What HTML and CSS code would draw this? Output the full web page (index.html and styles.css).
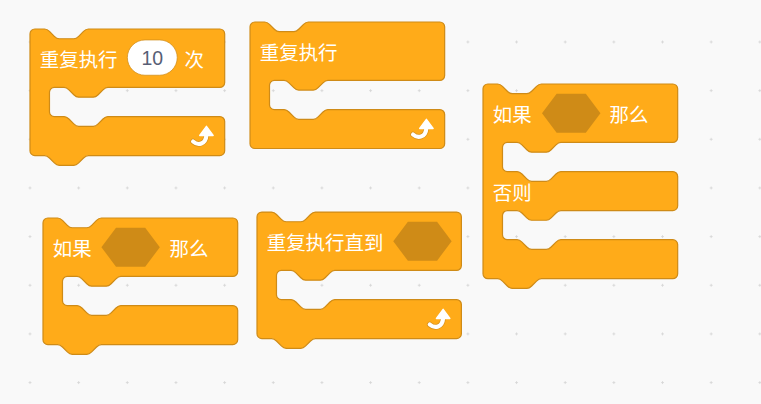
FILE: index.html
```html
<!DOCTYPE html>
<html lang="zh">
<head>
  <meta charset="UTF-8">
  <title>控制积木</title>
  <link rel="stylesheet" href="styles.css">
</head>
<body>
  <div class="workspace">

    <!-- 重复执行 10 次 -->
    <svg class="block b-repeat" viewBox="0 0 160 112">
      <path class="shape" d="M0,4 A4,4 0 0,1 4,0 H12 c2,0 3,1 4,2 l4,4 c1,1 2,2 4,2 h12 c2,0 3,-1 4,-2 l4,-4 c1,-1 2,-2 4,-2 H156 A4,4 0 0,1 160,4 V44 A4,4 0 0,1 156,48 H64 c-2,0 -3,1 -4,2 l-4,4 c-1,1 -2,2 -4,2 h-12 c-2,0 -3,-1 -4,-2 l-4,-4 c-1,-1 -2,-2 -4,-2 H20 A4,4 0 0,0 16,52 V68 A4,4 0 0,0 20,72 H28 c2,0 3,1 4,2 l4,4 c1,1 2,2 4,2 h12 c2,0 3,-1 4,-2 l4,-4 c1,-1 2,-2 4,-2 H156 A4,4 0 0,1 160,76 V100 A4,4 0 0,1 156,104 H48 c-2,0 -3,1 -4,2 l-4,4 c-1,1 -2,2 -4,2 h-12 c-2,0 -3,-1 -4,-2 l-4,-4 c-1,-1 -2,-2 -4,-2 H4 A4,4 0 0,1 0,100 Z"/>
      <text class="label" x="8" y="24">重复执行</text>
      <rect class="num-field" x="80" y="9" width="41" height="29" rx="14.5"/>
      <text class="num-text" x="100.5" y="24">10</text>
      <text class="label" x="127" y="24">次</text>
      <g class="loop-icon" transform="translate(130,76)">
        <path class="arrow-edge" d="M4 16.5 C8 20, 14.5 19, 15 11"/>
        <path class="arrow-line" d="M4 16.5 C8 20, 14.5 19, 15 11"/>
        <path class="arrow-head" d="M15 4 L20.5 11.5 L9.5 11.5 Z"/>
      </g>
    </svg>

    <!-- 重复执行 -->
    <svg class="block b-forever" viewBox="0 0 160 104">
      <path class="shape" d="M0,4 A4,4 0 0,1 4,0 H12 c2,0 3,1 4,2 l4,4 c1,1 2,2 4,2 h12 c2,0 3,-1 4,-2 l4,-4 c1,-1 2,-2 4,-2 H156 A4,4 0 0,1 160,4 V44 A4,4 0 0,1 156,48 H64 c-2,0 -3,1 -4,2 l-4,4 c-1,1 -2,2 -4,2 h-12 c-2,0 -3,-1 -4,-2 l-4,-4 c-1,-1 -2,-2 -4,-2 H20 A4,4 0 0,0 16,52 V68 A4,4 0 0,0 20,72 H28 c2,0 3,1 4,2 l4,4 c1,1 2,2 4,2 h12 c2,0 3,-1 4,-2 l4,-4 c1,-1 2,-2 4,-2 H156 A4,4 0 0,1 160,76 V100 A4,4 0 0,1 156,104 H4 A4,4 0 0,1 0,100 Z"/>
      <text class="label" x="8" y="24">重复执行</text>
      <g class="loop-icon" transform="translate(130,76)">
        <path class="arrow-edge" d="M4 16.5 C8 20, 14.5 19, 15 11"/>
        <path class="arrow-line" d="M4 16.5 C8 20, 14.5 19, 15 11"/>
        <path class="arrow-head" d="M15 4 L20.5 11.5 L9.5 11.5 Z"/>
      </g>
    </svg>

    <!-- 如果 那么 否则 -->
    <svg class="block b-ifelse" viewBox="0 0 160 168">
      <path class="shape" d="M0,4 A4,4 0 0,1 4,0 H12 c2,0 3,1 4,2 l4,4 c1,1 2,2 4,2 h12 c2,0 3,-1 4,-2 l4,-4 c1,-1 2,-2 4,-2 H156 A4,4 0 0,1 160,4 V44 A4,4 0 0,1 156,48 H64 c-2,0 -3,1 -4,2 l-4,4 c-1,1 -2,2 -4,2 h-12 c-2,0 -3,-1 -4,-2 l-4,-4 c-1,-1 -2,-2 -4,-2 H20 A4,4 0 0,0 16,52 V68 A4,4 0 0,0 20,72 H28 c2,0 3,1 4,2 l4,4 c1,1 2,2 4,2 h12 c2,0 3,-1 4,-2 l4,-4 c1,-1 2,-2 4,-2 H156 A4,4 0 0,1 160,76 V100 A4,4 0 0,1 156,104 H64 c-2,0 -3,1 -4,2 l-4,4 c-1,1 -2,2 -4,2 h-12 c-2,0 -3,-1 -4,-2 l-4,-4 c-1,-1 -2,-2 -4,-2 H20 A4,4 0 0,0 16,108 V124 A4,4 0 0,0 20,128 H28 c2,0 3,1 4,2 l4,4 c1,1 2,2 4,2 h12 c2,0 3,-1 4,-2 l4,-4 c1,-1 2,-2 4,-2 H156 A4,4 0 0,1 160,132 V156 A4,4 0 0,1 156,160 H48 c-2,0 -3,1 -4,2 l-4,4 c-1,1 -2,2 -4,2 h-12 c-2,0 -3,-1 -4,-2 l-4,-4 c-1,-1 -2,-2 -4,-2 H4 A4,4 0 0,1 0,156 Z"/>
      <text class="label" x="8" y="24">如果</text>
      <path class="hole" transform="translate(48.5,8)" d="M12,0 H36 L48,16 L36,32 H12 L0,16 Z"/>
      <text class="label" x="104" y="24">那么</text>
      <text class="label" x="8" y="88">否则</text>
    </svg>

    <!-- 如果 那么 -->
    <svg class="block b-if" viewBox="0 0 160 112">
      <path class="shape" d="M0,4 A4,4 0 0,1 4,0 H12 c2,0 3,1 4,2 l4,4 c1,1 2,2 4,2 h12 c2,0 3,-1 4,-2 l4,-4 c1,-1 2,-2 4,-2 H156 A4,4 0 0,1 160,4 V44 A4,4 0 0,1 156,48 H64 c-2,0 -3,1 -4,2 l-4,4 c-1,1 -2,2 -4,2 h-12 c-2,0 -3,-1 -4,-2 l-4,-4 c-1,-1 -2,-2 -4,-2 H20 A4,4 0 0,0 16,52 V68 A4,4 0 0,0 20,72 H28 c2,0 3,1 4,2 l4,4 c1,1 2,2 4,2 h12 c2,0 3,-1 4,-2 l4,-4 c1,-1 2,-2 4,-2 H156 A4,4 0 0,1 160,76 V100 A4,4 0 0,1 156,104 H48 c-2,0 -3,1 -4,2 l-4,4 c-1,1 -2,2 -4,2 h-12 c-2,0 -3,-1 -4,-2 l-4,-4 c-1,-1 -2,-2 -4,-2 H4 A4,4 0 0,1 0,100 Z"/>
      <text class="label" x="8" y="24">如果</text>
      <path class="hole" transform="translate(48,8)" d="M12,0 H36 L48,16 L36,32 H12 L0,16 Z"/>
      <text class="label" x="104" y="24">那么</text>
    </svg>

    <!-- 重复执行直到 -->
    <svg class="block b-until" viewBox="0 0 168 112">
      <path class="shape" d="M0,4 A4,4 0 0,1 4,0 H12 c2,0 3,1 4,2 l4,4 c1,1 2,2 4,2 h12 c2,0 3,-1 4,-2 l4,-4 c1,-1 2,-2 4,-2 H164 A4,4 0 0,1 168,4 V44 A4,4 0 0,1 164,48 H64 c-2,0 -3,1 -4,2 l-4,4 c-1,1 -2,2 -4,2 h-12 c-2,0 -3,-1 -4,-2 l-4,-4 c-1,-1 -2,-2 -4,-2 H20 A4,4 0 0,0 16,52 V68 A4,4 0 0,0 20,72 H28 c2,0 3,1 4,2 l4,4 c1,1 2,2 4,2 h12 c2,0 3,-1 4,-2 l4,-4 c1,-1 2,-2 4,-2 H164 A4,4 0 0,1 168,76 V100 A4,4 0 0,1 164,104 H48 c-2,0 -3,1 -4,2 l-4,4 c-1,1 -2,2 -4,2 h-12 c-2,0 -3,-1 -4,-2 l-4,-4 c-1,-1 -2,-2 -4,-2 H4 A4,4 0 0,1 0,100 Z"/>
      <text class="label" x="8" y="24">重复执行直到</text>
      <path class="hole" transform="translate(112,8)" d="M12,0 H36 L48,16 L36,32 H12 L0,16 Z"/>
      <g class="loop-icon" transform="translate(138,76)">
        <path class="arrow-edge" d="M4 16.5 C8 20, 14.5 19, 15 11"/>
        <path class="arrow-line" d="M4 16.5 C8 20, 14.5 19, 15 11"/>
        <path class="arrow-head" d="M15 4 L20.5 11.5 L9.5 11.5 Z"/>
      </g>
    </svg>

  </div>
</body>
</html>
```

FILE: styles.css
```css
html, body {
  margin: 0;
  padding: 0;
}

body {
  background: #f9f9f9;
  overflow: hidden;
}

.workspace {
  position: relative;
  width: 761px;
  height: 404px;
  background-color: #f9f9f9;
  background-image: radial-gradient(circle, #d6d6d6 0.9px, transparent 1.4px);
  background-size: 48.67px 48.67px;
  background-position: 5.67px 17.67px;
}

/* blocks sit on a free canvas, so they are placed by coordinates */
.block {
  position: absolute;
  overflow: visible;
}

.b-repeat  { left: 30px;    top: 29.3px;  width: 194.7px; height: 136.3px; }
.b-forever { left: 250px;   top: 22.3px;  width: 194.7px; height: 126.5px; }
.b-ifelse  { left: 482.5px; top: 84px;    width: 194.7px; height: 204.4px; }
.b-if      { left: 42.7px;  top: 218px;   width: 194.7px; height: 136.3px; }
.b-until   { left: 257.3px; top: 212.3px; width: 204.4px; height: 136.3px; }

.shape {
  fill: #ffab19;
  stroke: #cf8b17;
  stroke-width: 1;
}

.label {
  fill: #fff;
  font-family: "Noto Sans CJK SC", "Noto Sans", sans-serif;
  font-size: 16px;
  dominant-baseline: central;
}

.num-field {
  fill: #fff;
  stroke: #cf8b17;
  stroke-width: 0.6;
}

.num-text {
  fill: #575e75;
  font-family: "Liberation Sans", Arial, sans-serif;
  font-size: 16px;
  text-anchor: middle;
  dominant-baseline: central;
}

.hole {
  fill: #cf8b17;
}

.arrow-edge {
  fill: none;
  stroke: #d8921e;
  stroke-width: 4.6;
  stroke-linecap: round;
}

.arrow-line {
  fill: none;
  stroke: #fff;
  stroke-width: 3.4;
  stroke-linecap: round;
}

.arrow-head {
  fill: #fff;
  stroke: #fff;
  stroke-width: 1.2;
  stroke-linejoin: round;
}
```
